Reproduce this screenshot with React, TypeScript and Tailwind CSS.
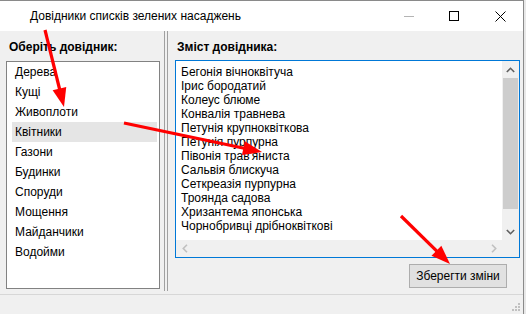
import React from "react";

const categories = [
  "Дерева",
  "Кущі",
  "Живоплоти",
  "Квітники",
  "Газони",
  "Будинки",
  "Споруди",
  "Мощення",
  "Майданчики",
  "Водойми",
];

const plants = [
  "Бегонія вічноквітуча",
  "Ірис бородатий",
  "Колеус блюме",
  "Конвалія травнева",
  "Петунія крупноквіткова",
  "Петунія пурпурна",
  "Півонія трав'яниста",
  "Сальвія блискуча",
  "Сеткреазія пурпурна",
  "Троянда садова",
  "Хризантема японська",
  "Чорнобривці дрібноквіткові",
];

// red annotation arrows drawn over the window
const arrows = [
  { x1: 45, y1: 30, x2: 64, y2: 107 },
  { x1: 124, y1: 123, x2: 262, y2: 152 },
  { x1: 401, y1: 216, x2: 450, y2: 264 },
];

function Arrow({ x1, y1, x2, y2 }: { x1: number; y1: number; x2: number; y2: number }) {
  const dx = x2 - x1;
  const dy = y2 - y1;
  const len = Math.hypot(dx, dy);
  const ux = dx / len;
  const uy = dy / len;
  const hl = 19;
  const hw = 7;
  const bx = x2 - ux * hl;
  const by = y2 - uy * hl;
  const pts = `${x2},${y2} ${bx - uy * hw},${by + ux * hw} ${bx + uy * hw},${by - ux * hw}`;
  return (
    <g>
      <line x1={x1} y1={y1} x2={bx + ux * 2} y2={by + uy * 2} stroke="#ff0000" strokeWidth={3.2} />
      <polygon points={pts} fill="#ff0000" />
    </g>
  );
}

export default function App() {
  return (
    <div
      className="relative w-[526px] h-[314px] overflow-hidden bg-[#e8e8e8] text-[12px] text-black"
      style={{ fontFamily: '"Liberation Sans", Arial, sans-serif' }}
    >
      <div className="w-[524px] h-[314px] flex flex-col bg-[#f0f0f0] border-t border-r border-[#8a8a8a]">
        {/* Title bar */}
        <div className="h-[30px] bg-white flex items-center shrink-0">
          <div className="pl-[30px] flex-1 leading-none">Довідники списків зелених насаджень</div>
          <div className="flex h-full">
            <div className="w-[45px] h-full flex items-center justify-center">
              <svg width="10" height="10" viewBox="0 0 10 10">
                <line x1="0" y1="5.5" x2="10" y2="5.5" stroke="#b4b4b4" strokeWidth="1" />
              </svg>
            </div>
            <div className="w-[46px] h-full flex items-center justify-center">
              <svg width="10" height="10" viewBox="0 0 10 10">
                <rect x="0.5" y="0.5" width="9" height="9" fill="none" stroke="#000" strokeWidth="1" />
              </svg>
            </div>
            <div className="w-[46px] h-full flex items-center justify-center">
              <svg width="11" height="11" viewBox="0 0 11 11">
                <path d="M0.5 0.5 L10.5 10.5 M10.5 0.5 L0.5 10.5" stroke="#000" strokeWidth="1" />
              </svg>
            </div>
          </div>
        </div>

        {/* Main area */}
        <div className="h-[262px] flex shrink-0">
          {/* Left panel */}
          <div className="w-[165px] pl-[6px] pr-[4px] pt-[9px] pb-[4px] flex flex-col">
            <div className="pl-[3px] h-[14px] leading-[14px] font-bold">Оберіть довідник:</div>
            <div className="mt-[7px] flex-1 bg-white border border-[#828282] pl-[5px] pr-[2px]">
              {categories.map((c) => (
                <div
                  key={c}
                  className={`h-[20px] leading-[20px] pl-[3px] ${c === "Квітники" ? "bg-[#e5e5e5]" : ""}`}
                >
                  {c}
                </div>
              ))}
            </div>
          </div>

          {/* Splitter */}
          <div className="w-[4px] mb-[2px] border-l border-r border-[#a0a0a0]" />

          {/* Right panel */}
          <div className="flex-1 pl-[7px] pr-[3px] pt-[9px] flex flex-col">
            <div className="pl-[2px] h-[14px] leading-[14px] font-bold">Зміст довідника:</div>
            <div className="mt-[6px] w-[345px] h-[198px] border border-[#0078d7] bg-white flex flex-col">
              <div className="flex flex-1 min-h-0">
                <div className="flex-1 pl-[5px] pt-[4px]">
                  {plants.map((p) => (
                    <div key={p} className="h-[14px] leading-[14px] whitespace-nowrap">
                      {p}
                    </div>
                  ))}
                </div>
                {/* Vertical scrollbar */}
                <div className="w-[17px] bg-[#f0f0f0] flex flex-col">
                  <div className="h-[17px] flex items-center justify-center">
                    <svg width="9" height="6" viewBox="0 0 9 6">
                      <path d="M0.8 5 L4.5 1.3 L8.2 5" fill="none" stroke="#606060" strokeWidth="1.6" />
                    </svg>
                  </div>
                  <div className="h-[131px] mx-[1px] bg-[#cdcdcd]" />
                  <div className="flex-1" />
                  <div className="h-[17px] flex items-center justify-center">
                    <svg width="9" height="6" viewBox="0 0 9 6">
                      <path d="M0.8 1 L4.5 4.7 L8.2 1" fill="none" stroke="#606060" strokeWidth="1.6" />
                    </svg>
                  </div>
                </div>
              </div>
              {/* Horizontal scrollbar */}
              <div className="h-[17px] bg-[#f0f0f0] flex items-center">
                <div className="w-[17px] h-full flex items-center justify-center">
                  <svg width="6" height="9" viewBox="0 0 6 9">
                    <path d="M5 0.8 L1.3 4.5 L5 8.2" fill="none" stroke="#c0c0c0" strokeWidth="1.6" />
                  </svg>
                </div>
                <div className="flex-1" />
                <div className="w-[17px] h-full flex items-center justify-center">
                  <svg width="6" height="9" viewBox="0 0 6 9">
                    <path d="M1 0.8 L4.7 4.5 L1 8.2" fill="none" stroke="#c0c0c0" strokeWidth="1.6" />
                  </svg>
                </div>
                <div className="w-[17px] h-full bg-[#f0f0f0]" />
              </div>
            </div>
            <div className="mt-[6px] flex justify-end pr-[13px]">
              <button className="w-[98px] h-[24px] bg-[#e1e1e1] border border-[#adadad] leading-none">
                Зберегти зміни
              </button>
            </div>
          </div>
        </div>

        {/* Status strip */}
        <div className="flex-1 pt-[1px]">
          <div className="h-full border-t border-[#d7d7d7] flex justify-end items-end pr-[2px] pb-[2px]">
            <svg width="10" height="10" viewBox="0 0 10 10">
              <rect x="7" y="1" width="2" height="2" fill="#c0c0c0" />
              <rect x="4" y="4" width="2" height="2" fill="#c0c0c0" />
              <rect x="7" y="4" width="2" height="2" fill="#c0c0c0" />
              <rect x="1" y="7" width="2" height="2" fill="#c0c0c0" />
              <rect x="4" y="7" width="2" height="2" fill="#c0c0c0" />
              <rect x="7" y="7" width="2" height="2" fill="#c0c0c0" />
            </svg>
          </div>
        </div>
      </div>

      {/* Annotation arrows */}
      <svg className="absolute left-0 top-0 pointer-events-none" width="526" height="314">
        {arrows.map((a, i) => (
          <Arrow key={i} {...a} />
        ))}
      </svg>
    </div>
  );
}
